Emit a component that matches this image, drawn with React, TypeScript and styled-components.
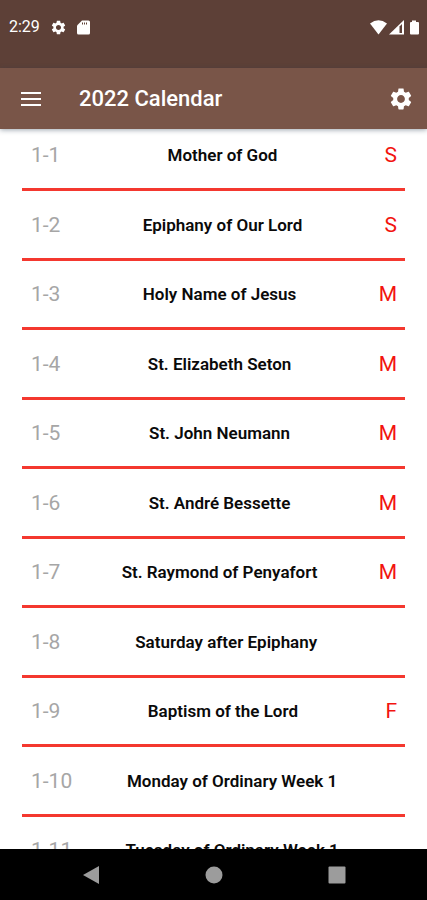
import React from "react";
import styled, { createGlobalStyle } from "styled-components";

const GlobalStyle = createGlobalStyle`
  *, *::before, *::after { box-sizing: border-box; }
  html, body, #root { height: 100%; margin: 0; }
  body { font-family: Roboto, "Noto Sans", sans-serif; background: #fff; }
  button { border: 0; padding: 0; background: none; font: inherit; color: inherit; cursor: pointer; }
`;

const Screen = styled.div`
  display: flex;
  flex-direction: column;
  height: 100vh;
  overflow: hidden;
`;

const StatusBar = styled.header`
  display: flex;
  flex: none;
  justify-content: space-between;
  height: 68px;
  padding: 18px 7px 0 9px;
  background: #5d4037;
  color: #fff;
`;

const StatusGroup = styled.div<{ $gap: number }>`
  display: flex;
  align-items: center;
  gap: ${(p) => p.$gap}px;
  height: 18px;
`;

const Clock = styled.time`
  font-size: 16px;
  line-height: 20px;
`;

const AppBar = styled.div`
  display: flex;
  flex: none;
  align-items: center;
  height: 61px;
  padding: 0 13px 0 18px;
  background: #795548;
  color: #fff;
  box-shadow: 0 1px 5px rgba(40, 60, 80, 0.45);
  z-index: 1;
`;

const Title = styled.h1`
  flex: 1;
  margin: 0 0 0 35px;
  font-size: 22px;
  line-height: 28px;
  font-weight: 500;
`;

const IconButton = styled.button`
  display: flex;
  align-items: center;
  justify-content: center;
`;

const DayList = styled.ul`
  flex: 1;
  min-height: 0;
  overflow: hidden;
  margin: 0;
  padding: 0 22px;
  list-style: none;
`;

const DayRow = styled.li`
  display: flex;
  align-items: center;
  height: 69px;
  padding: 0 8px 0 9px;
  border-bottom: 3px solid #f4382f;

  &:nth-child(even) { height: 70px; }
  &:first-child {
    height: 62px;
    padding-bottom: 8px;
  }
`;

const DayDate = styled.span`
  font-size: 21px;
  line-height: 26px;
  color: #a6a6a6;
`;

const DayName = styled.span`
  flex: 1;
  text-align: center;
  font-size: 17px;
  line-height: 26px;
  font-weight: 600;
  color: #0a0a0a;
`;

const DayRank = styled.span`
  min-width: 5px;
  font-size: 21px;
  line-height: 26px;
  color: #f2140f;
`;

const NavBar = styled.nav`
  display: flex;
  flex: none;
  align-items: center;
  justify-content: space-around;
  height: 51px;
  padding: 0 29px;
  background: #000;
  color: #9c9c9c;
`;

const GEAR =
  "M19.14 12.94c.04-.3.06-.61.06-.94 0-.32-.02-.64-.07-.94l2.03-1.58c.18-.14.23-.41.12-.61l-1.92-3.32c-.12-.22-.37-.29-.59-.22l-2.39.96c-.5-.38-1.03-.7-1.62-.94l-.36-2.54c-.04-.24-.24-.41-.48-.41h-3.84c-.24 0-.43.17-.47.41l-.36 2.54c-.59.24-1.13.57-1.62.94l-2.39-.96c-.22-.08-.47 0-.59.22L2.74 8.87c-.12.21-.08.47.12.61l2.03 1.58c-.05.3-.09.63-.09.94s.02.64.07.94l-2.03 1.58c-.18.14-.23.41-.12.61l1.92 3.32c.12.22.37.29.59.22l2.39-.96c.5.38 1.03.7 1.62.94l.36 2.54c.05.24.24.41.48.41h3.84c.24 0 .44-.17.47-.41l.36-2.54c.59-.24 1.13-.56 1.62-.94l2.39.96c.22.08.47 0 .59-.22l1.92-3.32c.12-.22.07-.47-.12-.61l-2.01-1.58zM12 15.6c-1.98 0-3.6-1.62-3.6-3.6s1.62-3.6 3.6-3.6 3.6 1.62 3.6 3.6-1.62 3.6-3.6 3.6z";

const Gear = ({ size }: { size: number }) => (
  <svg width={size} height={size} viewBox="0 0 24 24" fill="currentColor" aria-hidden="true">
    <path d={GEAR} />
  </svg>
);

interface Day {
  date: string;
  name: string;
  rank?: string;
}

const days: Day[] = [
  { date: "1-1", name: "Mother of God", rank: "S" },
  { date: "1-2", name: "Epiphany of Our Lord", rank: "S" },
  { date: "1-3", name: "Holy Name of Jesus", rank: "M" },
  { date: "1-4", name: "St. Elizabeth Seton", rank: "M" },
  { date: "1-5", name: "St. John Neumann", rank: "M" },
  { date: "1-6", name: "St. André Bessette", rank: "M" },
  { date: "1-7", name: "St. Raymond of Penyafort", rank: "M" },
  { date: "1-8", name: "Saturday after Epiphany" },
  { date: "1-9", name: "Baptism of the Lord", rank: "F" },
  { date: "1-10", name: "Monday of Ordinary Week 1" },
  { date: "1-11", name: "Tuesday of Ordinary Week 1" },
];

export default function App() {
  return (
    <Screen>
      <GlobalStyle />
      <StatusBar>
        <StatusGroup $gap={10}>
          <Clock>2:29</Clock>
          <Gear size={17} />
          <svg width="13" height="15" viewBox="0 0 13 15" aria-hidden="true">
            <path fill="#fff" d="M5 .5h6.500q1.500 0 1.500 1.500v11q0 1.500-1.500 1.500h-10Q0 14.500 0 13V5.500z" />
            <path stroke="#5d4037" strokeWidth="1" d="M5.500 2.500v2M7.500 2.500v2M9.500 2.500v2" />
          </svg>
        </StatusGroup>
        <StatusGroup $gap={2}>
          <svg width="17" height="15" viewBox="0 0 17 15" fill="#fff" aria-hidden="true">
            <path d="M0 3.600Q8.500-3 17 3.600L8.500 14.500z" />
          </svg>
          <svg width="15" height="15" viewBox="0 0 15 15" aria-hidden="true">
            <path fill="#fff" d="M15 0v14.500H0z" />
            <path fill="#5d4037" d="M10.500 6.500l2.500-2.500v9h-2.500z" />
          </svg>
          <svg width="14" height="15" viewBox="0 0 14 15" fill="#fff" aria-hidden="true">
            <path d="M6 .5h4V2h2q1 0 1 1v10.500q0 1-1 1H5q-1 0-1-1V3q0-1 1-1h1z" />
          </svg>
        </StatusGroup>
      </StatusBar>
      <AppBar>
        <IconButton aria-label="Open menu">
          <svg width="26" height="26" viewBox="0 0 26 26" aria-hidden="true">
            <path stroke="#fff" strokeWidth="2" d="M3 7h20M3 13h20M3 19h20" />
          </svg>
        </IconButton>
        <Title>2022 Calendar</Title>
        <IconButton aria-label="Settings">
          <Gear size={26} />
        </IconButton>
      </AppBar>
      <DayList>
        {days.map((day) => (
          <DayRow key={day.date}>
            <DayDate>{day.date}</DayDate>
            <DayName>{day.name}</DayName>
            <DayRank>{day.rank}</DayRank>
          </DayRow>
        ))}
      </DayList>
      <NavBar>
        <IconButton aria-label="Back">
          <svg width="18" height="20" viewBox="0 0 18 20" fill="currentColor" aria-hidden="true">
            <path d="M17 1v18L1 10z" />
          </svg>
        </IconButton>
        <IconButton aria-label="Home">
          <svg width="18" height="18" viewBox="0 0 18 18" fill="currentColor" aria-hidden="true">
            <circle cx="9" cy="9" r="8.500" />
          </svg>
        </IconButton>
        <IconButton aria-label="Recent apps">
          <svg width="18" height="18" viewBox="0 0 18 18" fill="currentColor" aria-hidden="true">
            <rect x=".5" y=".5" width="17" height="17" rx="1" />
          </svg>
        </IconButton>
      </NavBar>
    </Screen>
  );
}
